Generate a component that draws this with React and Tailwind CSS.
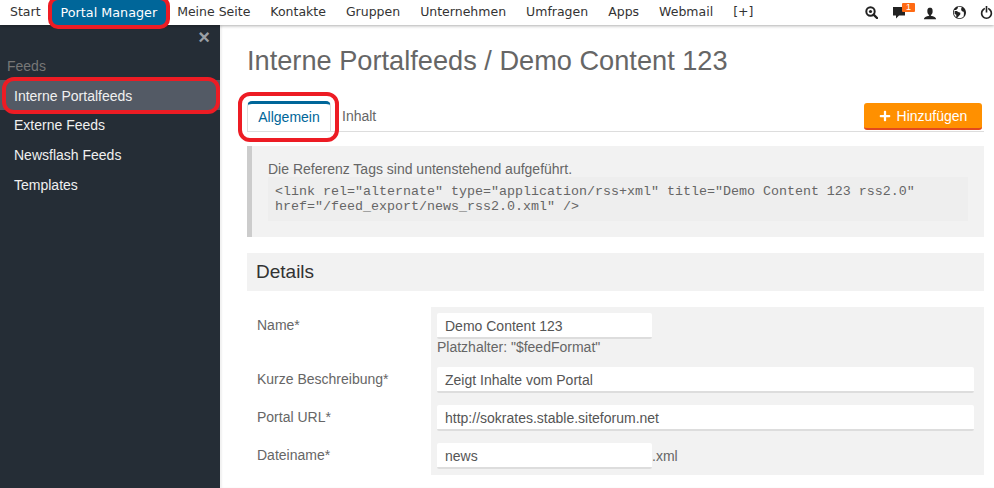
import React from "react";
import { ImUser, ImEarth, ImSwitch } from "react-icons/im";
import { FaPlus } from "react-icons/fa";

const navItems = ["Meine Seite", "Kontakte", "Gruppen", "Unternehmen", "Umfragen", "Apps", "Webmail", "[+]"];
const sideItems = ["Externe Feeds", "Newsflash Feeds", "Templates"];

const ZoomIcon = () => (
  <svg width="13" height="13" viewBox="0 0 13 13" fill="none">
    <circle cx="5.5" cy="5.5" r="4.2" stroke="#222" strokeWidth="2" />
    <circle cx="5.5" cy="5.5" r="1.6" fill="#222" />
    <path d="M8.6 8.6L12 12" stroke="#222" strokeWidth="2.4" strokeLinecap="round" />
  </svg>
);

const ChatIcon = () => (
  <svg width="13" height="13" viewBox="0 0 13 13">
    <path d="M0 1h12v8.5H6L3 12.5V9.5H0z" fill="#222" />
  </svg>
);

const Field = ({ label, value, short, suffix, hint }) => (
  <div className="flex">
    <div className="w-[184px] pl-[10px] pt-[8px] text-sm leading-5 text-[#666]">{label}</div>
    <div className="flex-1 bg-[#f2f2f2] pl-[6px] pr-[10px] pt-[6px] pb-[6px]">
      <div className="flex items-center">
        <div
          className={`h-[26px] rounded-[2px] border-b-2 border-[#ddd] bg-white px-2 text-sm leading-[26px] text-[#555] ${
            short ? "w-[215px]" : "flex-1"
          }`}
        >
          {value}
        </div>
        {suffix && <span className="text-sm text-[#666]">{suffix}</span>}
      </div>
      {hint && <div className="h-[16px] text-sm leading-[16px] text-[#666]">{hint}</div>}
    </div>
  </div>
);

export default function App() {
  return (
    <div className="flex h-[488px] w-[994px] flex-col overflow-hidden bg-white font-['Liberation_Sans',sans-serif]">
      <nav className="z-10 flex h-[25px] shrink-0 items-center bg-white font-['DejaVu_Sans',sans-serif] text-[12.5px] text-[#333] shadow-[0_1px_3px_rgba(0,0,0,0.3)]">
        <a className="px-[10px]">Start</a>
        <a className="relative flex h-[25px] items-center bg-[#006699] px-[10px] text-[12.75px] text-white">
          Portal Manager
          <span className="absolute -top-[4px] -right-[3px] -bottom-[4px] -left-[3px] rounded-[10px] border-4 border-[#ed1c24]" />
        </a>
        {navItems.map((item) => (
          <a key={item} className="px-[10px]">
            {item}
          </a>
        ))}
        <div className="ml-auto flex items-center text-[13px] text-[#222]">
          <span><ZoomIcon /></span>
          <span className="relative ml-[15px]">
            <ChatIcon />
            <span className="absolute -top-[3px] left-[9px] h-[9px] w-[13px] rounded-[1px] bg-[#ff6a13] text-center font-['Liberation_Sans',sans-serif] text-[9px] leading-[9px] text-white">
              1
            </span>
          </span>
          <span className="ml-[17px] text-[14px]"><ImUser /></span>
          <span className="ml-[16px]"><ImEarth /></span>
          <span className="mr-[1px] ml-[14px]"><ImSwitch /></span>
        </div>
      </nav>

      <div className="flex flex-1">
        <aside className="w-[220px] shrink-0 bg-[#252d36] text-sm">
          <div className="flex h-[25px] items-center justify-end pr-[10px] text-[20px] font-bold text-[#9a9fa5]">×</div>
          <div className="pt-[6px] pl-[7px] leading-5 text-[#777]">Feeds</div>
          <div className="relative mt-[4px] h-[30px] bg-[#535a65] pl-[14px] leading-[33px] text-[#f0f0f0]">
            Interne Portalfeeds
            <span className="absolute -top-[3px] right-0 -bottom-[4px] left-[2px] rounded-[12px] border-4 border-[#ed1c24]" />
          </div>
          {sideItems.map((item) => (
            <div key={item} className="h-[30px] pl-[14px] leading-[30px] text-[#f0f0f0]">
              {item}
            </div>
          ))}
        </aside>

        <main className="flex-1 pt-[20px] pr-[10px] pl-[27px] shadow-[inset_2px_0_2px_rgba(0,0,0,0.06)]">
          <h1 className="text-[27.2px] leading-[32px] text-[#666]">Interne Portalfeeds / Demo Content 123</h1>

          <div className="mt-[25px] flex h-[30px] items-end border-b border-[#ddd] text-sm">
            <div className="relative h-[30px] w-[84px] rounded-t-[5px] border-x border-t-[3px] border-[#ddd] border-t-[#006699] bg-white text-center leading-[27px] text-[#006699]">
              Allgemein
              <span className="absolute -top-[12px] -right-[9px] -bottom-[11px] -left-[10px] rounded-[12px] border-4 border-[#ed1c24]" />
            </div>
            <div className="ml-[11px] h-[29px] leading-[29px] text-[#666]">Inhalt</div>
            <button className="mr-[2px] mb-[1px] ml-auto flex h-[27px] w-[118px] items-center justify-center gap-[6px] rounded-[3px] border-b-2 border-[#e2491d] bg-[#ff9000] text-sm text-white">
              <FaPlus className="text-[12px]" />
              Hinzufügen
            </button>
          </div>

          <div className="mt-[14px] border-l-[5px] border-[#ccc] bg-[#f2f2f2] pt-[15px] pr-[16px] pb-[16px] pl-[16px]">
            <p className="text-sm leading-4 text-[#666]">Die Referenz Tags sind untenstehend aufgeführt.</p>
            <pre className="bg-[#eeeeee] py-[7px] pl-[7px] font-['Liberation_Mono',monospace] text-[13.33px] leading-[15px] text-[#666]">
              {'<link rel="alternate" type="application/rss+xml" title="Demo Content 123 rss2.0"\nhref="/feed_export/news_rss2.0.xml" />'}
            </pre>
          </div>

          <h2 className="mt-[16px] h-[38px] bg-[#f2f2f2] pl-[9px] text-[19px] leading-[38px] text-[#333]">Details</h2>

          <div className="mt-[16px]">
            <Field label="Name*" value="Demo Content 123" short hint={'Platzhalter: "$feedFormat"'} />
            <Field label="Kurze Beschreibung*" value="Zeigt Inhalte vom Portal" />
            <Field label="Portal URL*" value="http://sokrates.stable.siteforum.net" />
            <Field label="Dateiname*" value="news" short suffix=".xml" />
          </div>
        </main>
      </div>
    </div>
  );
}
